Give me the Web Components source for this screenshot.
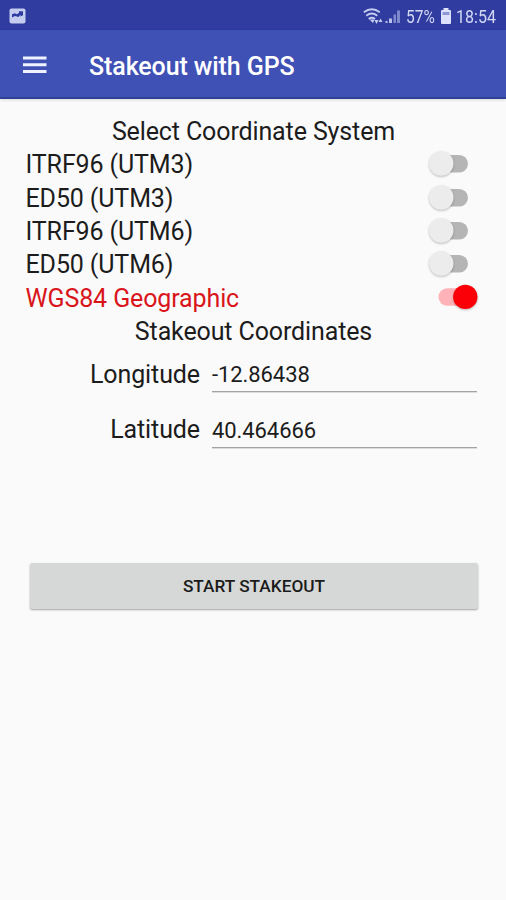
<!DOCTYPE html>
<html lang="en">
<head>
<meta charset="utf-8">
<title>Stakeout with GPS</title>
<style>
html, body { margin: 0; height: 100%; }
body { background: #fafafa; font-family: Roboto, sans-serif; color: #1c1c1c; overflow: hidden; }
</style>
</head>
<body>
<stakeout-app></stakeout-app>
<script>
const define = (name, html) => {
  const t = document.createElement('template');
  t.innerHTML = html;
  customElements.define(name, class extends HTMLElement {
    constructor() {
      super();
      this.attachShadow({ mode: 'open' }).appendChild(t.content.cloneNode(true));
    }
  });
};

define('status-bar', `
<style>
:host { display: flex; box-sizing: border-box; height: 30px; padding: 2px 10px 0 9px; align-items: center; background: #303c9f; color: #d3d9f5; font-size: 18px; }
svg { display: block; flex: none; }
.gap { flex: 1; }
span { display: block; white-space: nowrap; transform-origin: 0 50%; line-height: 29px; }
.pct { width: 29px; margin-left: 5px; transform: scaleX(.86); }
.time { width: 40px; margin-left: 4px; transform: scaleX(.89); }
.bat { margin-left: 5px; }
</style>
<svg width="17" height="16" viewBox="0 0 17 16"><rect x=".5" y=".5" width="16" height="15" rx="2" fill="#c4cdf0"/><path d="M3 9.500V6.200l3-1 1.500 1L10 5V3.300h4v4l-2.500 1.200V6.800L9.500 9 6 8z" fill="#303c9f"/></svg>
<div class="gap"></div>
<svg width="38" height="18" viewBox="0 0 38 18"><g fill="none" stroke="#c3cbef" stroke-width="1.900"><path d="M.8 5.300q8-6 16 0"/><path d="M3.300 8.700q5.500-4.300 11 0"/><path d="M5.700 12q3.200-2.500 6.300 0"/></g><path d="M6.500 12.500h5l-1.500 3.500z" fill="#c3cbef"/><path d="M11.500 13h4l-2 4zM15.500 15l2-3.500 2 3.500z" fill="#c3cbef"/><path d="M22.500 14h2v2h-2zM26 11.500h3V16h-3z" fill="#b6bfe9"/><path d="M30.500 7.500h2.500V16h-2.500zM34 3.500H37V16h-3z" fill="#7e88cc"/></svg>
<span class="pct">57%</span>
<svg class="bat" width="12" height="17" viewBox="0 0 12 17"><path d="M3.500 0h5v2H10q1 0 1 1v12q0 1-1 1H2q-1 0-1-1V3q0-1 1-1h1.500z" fill="#dce2fb"/><path d="M2.500 4h7v3h-7z" fill="#8e98d6"/></svg>
<span class="time">18:54</span>
`);

define('app-bar', `
<style>
:host { display: flex; box-sizing: border-box; height: 69px; align-items: center; padding: 2px 0 0 23px; background: #3f51b5; border-bottom: 2px solid #304096; color: #fff; box-shadow: 0 1px 3px rgba(0,0,0,.14); }
svg { display: block; margin-right: 42px; }
.t { font-size: 25px; letter-spacing: -.1px; font-weight: 500; line-height: 32px; white-space: nowrap; padding-top: 4px; }
</style>
<svg width="24" height="18" viewBox="0 0 24 18"><path d="M0 .5h23.500v3H0zM0 7.200h23.500v3H0zM0 14h23.500v3H0z" fill="#f0f3ff"/></svg>
<div class="t"><slot></slot></div>
`);

define('section-title', `
<style>
:host { display: block; height: 33.300px; line-height: 33.300px; text-align: center; white-space: nowrap; font-size: 25px; letter-spacing: -.12px; }
</style><slot></slot>`);

define('toggle-switch', `
<style>
:host { display: flex; width: 50px; height: 33px; }
svg { display: block; overflow: visible; }
.track { fill: #b5b5b5; } .knob { fill: #ececec; filter: drop-shadow(0 1px .8px rgba(0,0,0,.25)); }
.on { display: none; }
:host([checked]) .on { display: block; }
:host([checked]) .off { display: none; }
.on .track { fill: #ffb3b8; } .on .knob { fill: #fb0007; }
</style>
<svg width="50" height="33" viewBox="0 0 50 33">
<g class="off"><rect class="track" x="10" y="7" width="30" height="17.500" rx="8.750"/><circle class="knob" cx="13.300" cy="15.500" r="12.200"/></g>
<g class="on"><rect class="track" x="10.500" y="6.200" width="30" height="17.500" rx="8.750"/><circle class="knob" cx="37.300" cy="14.900" r="12.200"/></g>
</svg>`);

define('system-row', `
<style>
:host { display: flex; height: 33.300px; line-height: 33.300px; justify-content: space-between; font-size: 25px; letter-spacing: -.12px; white-space: nowrap; }
:host([selected]) { color: #d9151b; }
span { padding-left: .5px; }
</style><span><slot></slot></span><slot name="switch"></slot>`);

define('coord-field', `
<style>
:host { display: grid; grid-template-columns: 175px 265px; column-gap: 12px; height: 55.700px; }
.l { text-align: right; font-size: 25px; letter-spacing: -.1px; line-height: 32px; padding-top: 6.500px; white-space: nowrap; }
.v { box-sizing: border-box; height: 40px; border-bottom: 1px solid #a2a2a2; box-shadow: 0 1px #dcdcdc; font-size: 22px; letter-spacing: -.08px; line-height: 32px; padding-top: 7px; white-space: nowrap; }
</style>
<div class="l"><slot name="label"></slot></div><div class="v"><slot></slot></div>`);

define('raised-button', `
<style>
:host { display: flex; height: 46px; align-items: center; justify-content: center; border-radius: 2.500px; background: #d6d8d7; box-shadow: 0 1px 2px rgba(0,0,0,.35); font-size: 17.250px; font-weight: 500; color: #1b1b1b; white-space: nowrap; }
</style><slot></slot>`);

define('stakeout-app', `
<style>
:host { display: block; }
main { padding: 16.200px 28px 0 25px; }
.fields { padding-top: 3.800px; height: 112px; }
raised-button { margin: 99px 0 0 5px; }
section-title { margin-right: -3px; margin-left: 1px; }
</style>
<status-bar></status-bar>
<app-bar>Stakeout with GPS</app-bar>
<main>
<section-title>Select Coordinate System</section-title>
<system-row>ITRF96 (UTM3)<toggle-switch slot="switch"></toggle-switch></system-row>
<system-row>ED50 (UTM3)<toggle-switch slot="switch"></toggle-switch></system-row>
<system-row>ITRF96 (UTM6)<toggle-switch slot="switch"></toggle-switch></system-row>
<system-row>ED50 (UTM6)<toggle-switch slot="switch"></toggle-switch></system-row>
<system-row selected>WGS84 Geographic<toggle-switch slot="switch" checked></toggle-switch></system-row>
<section-title>Stakeout Coordinates</section-title>
<div class="fields">
<coord-field><span slot="label">Longitude</span>-12.86438</coord-field>
<coord-field><span slot="label">Latitude</span>40.464666</coord-field>
</div>
<raised-button>START STAKEOUT</raised-button>
</main>
`);
</script>
</body>
</html>
